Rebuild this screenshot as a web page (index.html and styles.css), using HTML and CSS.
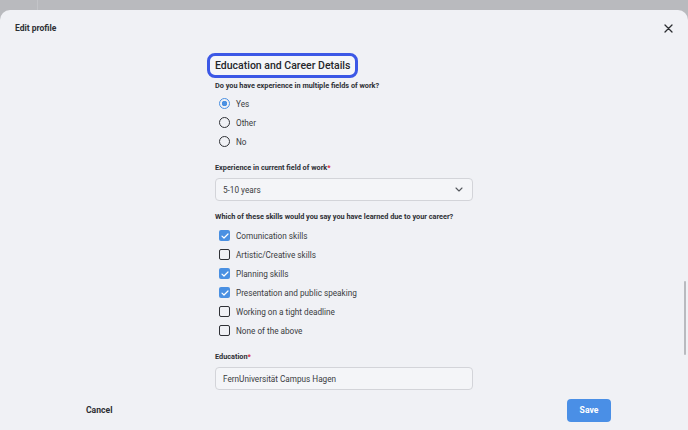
FILE: index.html
```html
<!DOCTYPE html>
<html>
<head>
<meta charset="utf-8">
<link rel="stylesheet" href="styles.css">
</head>
<body>
<div class="backdrop"><span class="bd-line"></span></div>
<div class="modal">
  <header class="modal-head">
    <h1 class="modal-title">Edit profile</h1>
    <button class="close" aria-label="Close">
      <svg width="9" height="9" viewBox="0 0 9 9"><path d="M1 1L8 8M8 1L1 8" stroke="#2b2d31" stroke-width="1.3" stroke-linecap="round"/></svg>
    </button>
  </header>
  <main class="modal-body">
    <div class="form">
      <h2 class="section-title">Education and Career Details</h2>
      <p class="q">Do you have experience in multiple fields of work?</p>
      <ul class="options">
        <li class="opt"><span class="radio on"></span>Yes</li>
        <li class="opt"><span class="radio"></span>Other</li>
        <li class="opt"><span class="radio"></span>No</li>
      </ul>
      <p class="q q-gap">Experience in current field of work<span class="req">*</span></p>
      <div class="field select">
        <span>5-10 years</span>
        <svg width="8" height="5" viewBox="0 0 8 5"><path d="M1 1L4 4L7 1" fill="none" stroke="#55585e" stroke-width="1.1" stroke-linecap="round" stroke-linejoin="round"/></svg>
      </div>
      <p class="q q-gap2">Which of these skills would you say you have learned due to your career?</p>
      <ul class="options">
        <li class="opt"><span class="check on"><svg width="8" height="6" viewBox="0 0 8 6"><path d="M1 3.1L3 5L7 1" fill="none" stroke="#fff" stroke-width="1.2" stroke-linecap="round" stroke-linejoin="round"/></svg></span>Comunication skills</li>
        <li class="opt"><span class="check"></span>Artistic/Creative skills</li>
        <li class="opt"><span class="check on"><svg width="8" height="6" viewBox="0 0 8 6"><path d="M1 3.1L3 5L7 1" fill="none" stroke="#fff" stroke-width="1.2" stroke-linecap="round" stroke-linejoin="round"/></svg></span>Planning skills</li>
        <li class="opt"><span class="check on"><svg width="8" height="6" viewBox="0 0 8 6"><path d="M1 3.1L3 5L7 1" fill="none" stroke="#fff" stroke-width="1.2" stroke-linecap="round" stroke-linejoin="round"/></svg></span>Presentation and public speaking</li>
        <li class="opt"><span class="check"></span>Working on a tight deadline</li>
        <li class="opt"><span class="check"></span>None of the above</li>
      </ul>
      <p class="q q-gap">Education<span class="req">*</span></p>
      <div class="field">FernUniversität Campus Hagen</div>
    </div>
    <span class="scrollbar"></span>
  </main>
  <footer class="modal-foot">
    <button class="btn-cancel">Cancel</button>
    <button class="btn-save">Save</button>
  </footer>
</div>
</body>
</html>
```
FILE: styles.css
```css
* { box-sizing: border-box; }
html, body { margin: 0; padding: 0; }
body {
  width: 688px;
  height: 430px;
  overflow: hidden;
  background: #b9babe;
  font-family: Roboto, "Noto Sans", sans-serif;
  color: #2d2f34;
}
.backdrop {
  height: 10px;
  position: relative;
}
.bd-line {
  position: absolute;
  left: 37px;
  top: 0;
  width: 1px;
  height: 10px;
  background: #c3c4c8;
}
.modal {
  height: 420px;
  background: #f0f1f5;
  border-radius: 10px 10px 0 0;
  display: flex;
  flex-direction: column;
}
.modal-head {
  height: 36px;
  display: flex;
  align-items: center;
  justify-content: space-between;
  padding: 0 15px 0 15px;
}
.modal-title {
  margin: 0;
  font-size: 8.5px;
  font-weight: 700;
  color: #2d2f34;
}
.close {
  border: 0;
  background: none;
  padding: 0;
  width: 9px;
  height: 9px;
  display: flex;
}
.modal-body {
  flex: 1;
  overflow: hidden;
  position: relative;
}
.form {
  width: 258px;
  margin: 0 auto;
  padding-top: 7px;
}
.section-title {
  display: inline-block;
  margin: 0 0 0 -8px;
  height: 25px;
  line-height: 19px;
  padding: 0 5px 0 5px;
  border: 3px solid #3c58e6;
  border-radius: 8px;
  font-size: 10.5px;
  font-weight: 500;
  color: #25272b;
  background: #f5f6f9;
  vertical-align: top;
}
.q {
  margin: 0;
  font-size: 7.3px;
  font-weight: 700;
  line-height: 16px;
  color: #2d2f34;
}
.q-gap { margin-top: 9px; margin-bottom: 2px; }
.q-gap2 { margin-top: 8px; margin-bottom: 1px; }
.req { color: #d9233a; }
.options {
  list-style: none;
  margin: 0;
  padding: 0;
}
.opt {
  height: 19px;
  display: flex;
  align-items: center;
  font-size: 8.2px;
  color: #3a3c41;
  padding-left: 4px;
}
.radio {
  width: 11px;
  height: 11px;
  border-radius: 50%;
  border: 1.5px solid #2f3136;
  margin-right: 6px;
  flex: none;
}
.radio.on {
  border-color: #4a90e2;
  background: radial-gradient(circle, #4a90e2 0 2.5px, transparent 3px);
}
.check {
  width: 11px;
  height: 11px;
  border-radius: 2px;
  border: 1.5px solid #2f3136;
  margin-right: 6px;
  flex: none;
  display: flex;
  align-items: center;
  justify-content: center;
}
.check.on {
  border: 0;
  background: #4a90e2;
}
.field {
  height: 23px;
  border: 1px solid #d3d4d9;
  border-radius: 4px;
  background: #f4f5f8;
  display: flex;
  align-items: center;
  justify-content: space-between;
  padding: 0 8px 0 7px;
  font-size: 8.2px;
  color: #3a3c41;
}
.select svg { margin-right: 1px; }
.scrollbar {
  position: absolute;
  right: 2px;
  top: 235px;
  width: 2px;
  height: 74px;
  background: #b9babf;
  border-radius: 1px;
}
.modal-foot {
  height: 40px;
  display: flex;
  align-items: center;
  justify-content: space-between;
  padding: 0 77px 0 77px;
}
.btn-cancel {
  border: 0;
  background: none;
  font-family: inherit;
  font-size: 8.6px;
  font-weight: 700;
  color: #2d2f34;
  padding: 0 9px;
  height: 23px;
}
.btn-save {
  border: 0;
  background: #4a8fe6;
  color: #fff;
  font-family: inherit;
  font-size: 8.6px;
  font-weight: 700;
  height: 23px;
  width: 44px;
  border-radius: 4px;
  padding: 0;
}
```
